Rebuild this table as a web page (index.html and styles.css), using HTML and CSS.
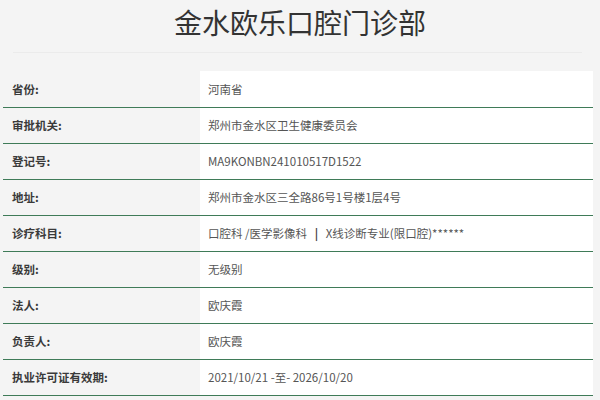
FILE: index.html
```html
<!DOCTYPE html>
<html lang="zh-CN">
<head>
<meta charset="utf-8">
<title>金水欧乐口腔门诊部</title>
<link rel="stylesheet" href="styles.css">
</head>
<body>
<div class="page">
  <h1 class="title">金水欧乐口腔门诊部</h1>
  <div class="rule"></div>
  <table class="info">
    <tr><th>省份:</th><td>河南省</td></tr>
    <tr><th>审批机关:</th><td>郑州市金水区卫生健康委员会</td></tr>
    <tr><th>登记号:</th><td>MA9KONBN241010517D1522</td></tr>
    <tr><th>地址:</th><td>郑州市金水区三全路86号1号楼1层4号</td></tr>
    <tr><th>诊疗科目:</th><td>口腔科 /医学影像科 <b class="sep">|</b> X线诊断专业(限口腔)******</td></tr>
    <tr><th>级别:</th><td>无级别</td></tr>
    <tr><th>法人:</th><td>欧庆霞</td></tr>
    <tr><th>负责人:</th><td>欧庆霞</td></tr>
    <tr><th>执业许可证有效期:</th><td>2021/10/21 -至- 2026/10/20</td></tr>
  </table>
</div>
</body>
</html>
```

FILE: styles.css
```css
html, body {
  margin: 0;
  padding: 0;
  background: #f4f4f4;
}
body {
  font-family: "Noto Sans CJK SC", "Noto Sans", sans-serif;
  color: #333;
}
.page {
  width: 600px;
  height: 400px;
  overflow: hidden;
}
.title {
  margin: 0;
  padding-top: 4px;
  height: 36px;
  line-height: 36px;
  font-size: 28px;
  font-weight: normal;
  text-align: center;
  color: #333;
}
.rule {
  margin: 12px 18px 0 13px;
  border-top: 1px solid #ebebeb;
}
.info {
  margin: 18px 0 0 3px;
  width: 590px;
  border-collapse: collapse;
  font-size: 11.5px;
}
.info tr {
  height: 36px;
  border-bottom: 1px solid #3f7b58;
}
.info th {
  width: 188px;
  padding: 0 0 0 9px;
  text-align: left;
  font-weight: bold;
  color: #3a3a3a;
}
.info td {
  padding: 0 8px;
  background: #fff;
  color: #555;
}
.sep {
  margin: 0 5px;
  font-weight: bold;
  color: #444;
}
```
